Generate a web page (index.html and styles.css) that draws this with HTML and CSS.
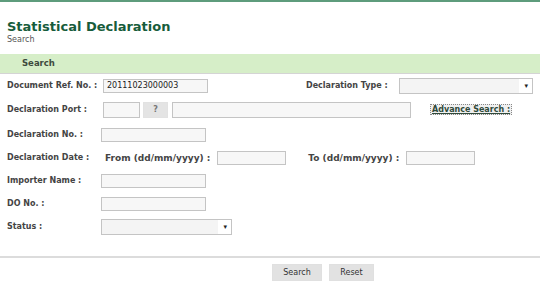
FILE: index.html
```html
<!DOCTYPE html>
<html lang="en">
<head>
  <meta charset="UTF-8">
  <title>Statistical Declaration</title>
  <link rel="stylesheet" href="styles.css">
</head>
<body>

  <div class="page-head">
    <h1 class="title">Statistical Declaration</h1>
    <div class="subtitle">Search</div>
  </div>

  <div class="section-bar">Search</div>

  <div class="form">
    <div class="row">
      <label class="label">Document Ref. No. :</label>
      <input class="field field-md first" type="text" value="20111023000003">
      <label class="label label-right">Declaration Type :</label>
      <div class="select select-type"><span class="arrow">&#9662;</span></div>
    </div>

    <div class="row row-top">
      <label class="label">Declaration Port :</label>
      <input class="field field-sm first" type="text">
      <button class="lookup-btn">?</button>
      <input class="field field-lg" type="text">
      <a class="adv-link" href="#">Advance Search :</a>
    </div>

    <div class="row">
      <label class="label">Declaration No. :</label>
      <input class="field field-md" type="text">
    </div>

    <div class="row">
      <label class="label">Declaration Date :</label>
      <span class="sub-label">From (dd/mm/yyyy) :</span>
      <input class="field field-date" type="text">
      <span class="sub-label to-label">To (dd/mm/yyyy) :</span>
      <input class="field field-date" type="text">
    </div>

    <div class="row">
      <label class="label">Importer Name :</label>
      <input class="field field-md" type="text">
    </div>

    <div class="row">
      <label class="label">DO No. :</label>
      <input class="field field-md" type="text">
    </div>

    <div class="row">
      <label class="label">Status :</label>
      <div class="select select-status"><span class="arrow">&#9662;</span></div>
    </div>
  </div>

  <div class="actions">
    <button class="btn btn-search">Search</button>
    <button class="btn btn-reset">Reset</button>
  </div>

</body>
</html>
```

FILE: styles.css
```css
body {
  margin: 0;
  font-family: "DejaVu Sans", Verdana, sans-serif;
  color: #444;
  background: #fff;
  border-top: 2px solid #5e9c7c;
}

.page-head {
  padding: 16px 7px 0;
  height: 36px;
}

.title {
  margin: 0;
  font-size: 13px;
  line-height: 17px;
  font-weight: bold;
  color: #175c3b;
}

.subtitle {
  font-size: 8px;
  line-height: 9px;
  color: #555;
}

.section-bar {
  height: 19px;
  line-height: 19px;
  padding-left: 22px;
  background: #d6eec8;
  border-bottom: 1px solid #d4d4d4;
  font-size: 8.5px;
  font-weight: bold;
  color: #3d4a3d;
}

.form {
  padding: 0 7px;
}

.row {
  display: flex;
  align-items: center;
  height: 23px;
}

.row-top {
  margin-top: 1px;
  margin-bottom: 2px;
}

.label {
  width: 94px;
  flex: none;
  font-size: 8px;
  font-weight: bold;
  color: #444;
}

.label-right {
  width: auto;
  margin-left: 98px;
  margin-right: 11px;
}

.sub-label {
  font-size: 9px;
  font-weight: bold;
  color: #444;
  margin-left: 4px;
  margin-right: 7px;
}

.to-label {
  margin-left: 22px;
}

.field {
  box-sizing: border-box;
  height: 14px;
  padding: 0 3px;
  border: 1px solid #c4c4c4;
  background: #f7f7f7;
  font-family: "DejaVu Sans", Verdana, sans-serif;
  font-size: 8px;
  color: #222;
}

.first {
  margin-left: 2px;
}

.field-sm {
  width: 37px;
  height: 16px;
}

.field-md {
  width: 105px;
}

.field-lg {
  width: 239px;
  height: 16px;
}

.field-date {
  width: 69px;
}

.select {
  box-sizing: border-box;
  height: 16px;
  border: 1px solid #c4c4c4;
  background: linear-gradient(to right, #f4f4f4 90%, #fff 90%);
  display: flex;
  align-items: center;
  justify-content: flex-end;
  padding-right: 4px;
}

.select-type {
  width: 136px;
}

.select-status {
  width: 131px;
}

.arrow {
  font-size: 7px;
  color: #222;
}

.lookup-btn {
  box-sizing: border-box;
  width: 25px;
  height: 16px;
  margin: 0 4px 0 3px;
  padding: 0;
  border: 1px solid #e2e2e2;
  background: #e4e4e4;
  font-family: "DejaVu Sans", Verdana, sans-serif;
  font-size: 8px;
  font-weight: bold;
  color: #777;
}

.adv-link {
  margin-left: 19px;
  padding: 0 1px;
  border: 1px dotted #888;
  background: #f0f0f0;
  font-size: 8px;
  font-weight: bold;
  color: #2f4a3a;
  text-decoration: underline;
}

.actions {
  margin-top: 18px;
  border-top: 2px solid #dcdcdc;
  padding: 6px 0 0 272px;
  display: flex;
  gap: 7px;
}

.btn {
  height: 17px;
  padding: 0;
  border: 1px solid #e0e0e0;
  background: #e2e2e2;
  font-family: "DejaVu Sans", Verdana, sans-serif;
  font-size: 8px;
  color: #333;
}

.btn-search {
  width: 50px;
}

.btn-reset {
  width: 45px;
}
```
